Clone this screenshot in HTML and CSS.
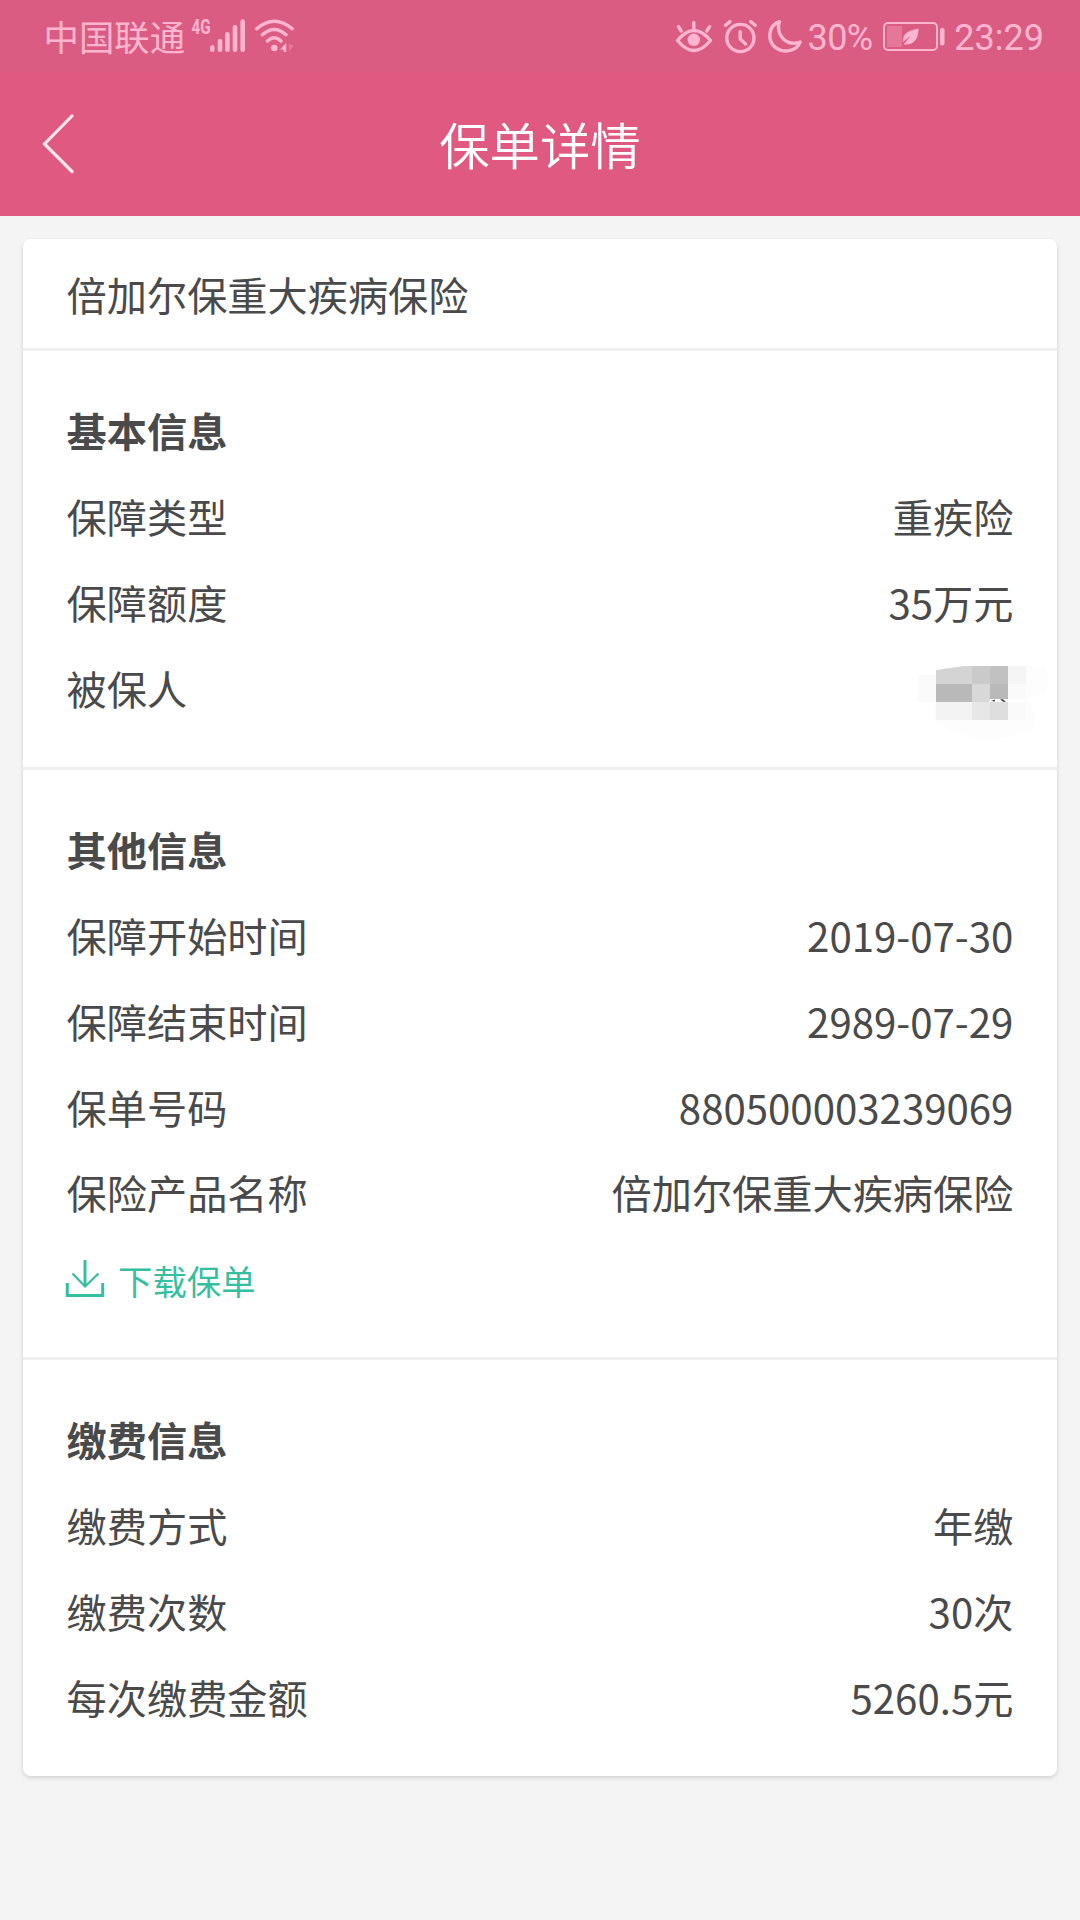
FILE: index.html
```html
<!DOCTYPE html>
<html lang="zh-CN">
<head>
  <meta charset="UTF-8" />
  <meta name="viewport" content="width=device-width, initial-scale=1.0"/>
  <title>保单详情</title>
  <link rel="stylesheet" href="styles.css">
</head>
<body>

<div class="status-bar">
  <div class="status-left">
    <span class="carrier">中国联通</span>
    <svg class="signal" width="56" height="52" viewBox="190 10 56 52">
      <text x="191.500" y="34" textLength="19" lengthAdjust="spacingAndGlyphs" class="network">4G</text>
      <g class="stroke bars">
        <path d="M212.3 47.5v2.2M220 41v8.7M227.4 34.4v15.3M235 27.2v22.5M242.7 21.5v28.2"/>
      </g>
    </svg>
    <svg class="wifi" width="40" height="36" viewBox="254 18 40 36">
      <path class="stroke" d="M256.7 28.7Q274.3 13.7 292.2 28.7M262.4 34.7Q274.3 24.3 286 34.7M267.5 41Q274.3 34.5 281 41"/>
      <circle class="solid" cx="274.3" cy="48" r="3.3"/>
      <path class="solid" d="M280 49.5L286.2 43v9h-2.5v-2.5z"/>
      <path class="solid dim" d="M288.8 43.5v8l5-5.5z"/>
    </svg>
  </div>
  <div class="status-right">
    <svg class="eye" width="38" height="36" viewBox="675 18 38 36">
      <path class="stroke" d="M677.5 40.5Q694 20.5 710.5 40.5Q694 60.5 677.5 40.5zM693.8 22.5v6M678.5 26.7l2.8 4.3M709.6 26.7l-2.8 4.3"/>
      <circle class="solid" cx="693.8" cy="39.8" r="6.2"/>
    </svg>
    <svg class="alarm" width="36" height="36" viewBox="723 18 36 36">
      <circle class="stroke" cx="740.4" cy="38" r="13.6"/>
      <path class="stroke" d="M740.2 31.7v7.4l5.4 4.8M725.6 25.2l4.4-3.6M755.2 25.2l-4.4-3.6"/>
    </svg>
    <svg class="moon" width="34" height="36" viewBox="768 18 34 36">
      <path class="stroke" d="M779.3 21.7C767.5 26 767 41 776 48C785 54 797 50.5 800.2 42C787 46.5 775.5 36 779.3 21.7z"/>
    </svg>
    <span class="percent">30%</span>
    <svg class="battery" width="64" height="32" viewBox="882 20 64 32">
      <rect class="frame" x="884" y="23" width="53" height="27" rx="4"/>
      <rect class="solid dim" x="887" y="26" width="15" height="21"/>
      <path class="solid" d="M918.5 28.5C907 31 902.5 34 903 42L911 35.5L903.5 44.5C914 45.5 918.5 39 918.5 28.5z"/>
      <rect class="solid" x="940" y="28" width="4.5" height="17.5" rx="2"/>
    </svg>
    <span class="clock">23:29</span>
  </div>
</div>

<header class="header">
  <a class="back" href="#">
    <svg width="34" height="60" viewBox="42 113 34 60">
      <path d="M72 115L44.5 143L72 170.500"/>
    </svg>
  </a>
  <h1 class="header-title">保单详情</h1>
</header>

<main class="card">
  <div class="card-title">倍加尔保重大疾病保险</div>

  <section class="section">
    <h2 class="row">基本信息</h2>
    <div class="row"><span>保障类型</span><span>重疾险</span></div>
    <div class="row"><span>保障额度</span><span>35万元</span></div>
    <div class="row">
      <span>被保人</span>
      <svg class="mosaic" width="146" height="78" viewBox="910 662 146 78">
        <path fill="#fdfdfd" d="M918 675h18v-3l28-6h62l18-1q6 7 6 15t-6 15l-16 3q12 14 4 32l-30 8q-40 4-68-18v-18h-18z"/>
        <path fill="#d4d4d4" d="M936 670l28-4h8v18h-36z"/>
        <path fill="#cacaca" d="M972 666h18v18h-18z"/>
        <path fill="#c1c1c1" d="M990 666h18v18h-18z"/>
        <path fill="#f5f5f5" d="M1008 666h18v18h-18z"/>
        <path fill="#b9b9b9" d="M936 684h36v18h-36zM990 684h18v15h-18z"/>
        <path fill="#d8d8d8" d="M972 684h18v18h-18z"/>
        <path fill="#fafafa" d="M1008 684h18v15h-18zM1008 702h18v18h-18zM918 675h18v27h-18z"/>
        <path fill="#f3f3f3" d="M936 702h36v18h-36z"/>
        <path fill="#e7e7e7" d="M972 702h18v18h-18z"/>
        <path fill="#dedede" d="M990 702h18v18h-18z"/>
        <path fill="#ffffff" d="M988 701l8-2h30v3h-36z"/>
        <path fill="#444444" d="M991 701l4-1.5v2zM1000 699.3h3l3 2.5h-3z"/>
      </svg>
    </div>
  </section>

  <section class="section">
    <h2 class="row">其他信息</h2>
    <div class="row"><span>保障开始时间</span><span>2019-07-30</span></div>
    <div class="row"><span>保障结束时间</span><span>2989-07-29</span></div>
    <div class="row"><span>保单号码</span><span>880500003239069</span></div>
    <div class="row"><span>保险产品名称</span><span>倍加尔保重大疾病保险</span></div>
    <a class="row download" href="#">
      <svg width="40" height="40" viewBox="65 1257 40 40">
        <path d="M67.3 1281v12.5h35.4V1281M85 1258v26"/>
        <path class="thin" d="M72.5 1271.5L85 1284.5L98.5 1271.5"/>
      </svg>
      <span>下载保单</span>
    </a>
  </section>

  <section class="section">
    <h2 class="row">缴费信息</h2>
    <div class="row"><span>缴费方式</span><span>年缴</span></div>
    <div class="row"><span>缴费次数</span><span>30次</span></div>
    <div class="row"><span>每次缴费金额</span><span>5260.5元</span></div>
  </section>
</main>

</body>
</html>
```
FILE: styles.css
```css
:root {
  --bg-color: #f4f4f4;
  --card-bg-color: #ffffff;
  --text-color: #4a4a4a;
  --border-color: #f0f0f0;
  --accent-color: #df5980;
  --status-bg-color: #da5c82;
  --status-color: #ffb5cf;
  --link-color: #36bf9f;
  --font-family: "Noto Sans CJK SC", sans-serif;
}

*, *::before, *::after { box-sizing: border-box; }

body {
  margin: 0;
  min-height: 1920px;
  background-color: var(--bg-color);
  color: var(--text-color);
  font-family: var(--font-family);
  font-size: 40.2px;
}

svg {
  display: block;
  flex-shrink: 0;
}

/* status bar */
.status-bar {
  display: flex;
  justify-content: space-between;
  height: 72px;
  padding: 0 36px 0 43.5px;
  background-color: var(--status-bg-color);
  color: var(--status-color);
}

.status-left,
.status-right {
  display: flex;
  align-items: center;
}

.carrier {
  font-size: 35.4px;
  font-weight: 400;
  line-height: 72px;
}

.signal { margin-left: 5px; }
.wifi { margin-left: 8px; }
.alarm { margin-left: 10px; }
.moon { margin-left: 9px; }

.network {
  font-family: Roboto, sans-serif;
  font-size: 20.5px;
  font-weight: 700;
  fill: var(--status-color);
}

.stroke {
  fill: none;
  stroke: var(--status-color);
  stroke-width: 3.4;
  stroke-linecap: round;
  stroke-linejoin: round;
}

.bars { stroke-width: 4.6; }
.solid { fill: var(--status-color); }
.dim { opacity: 0.3; }

.frame {
  fill: none;
  stroke: var(--status-color);
  stroke-width: 2;
}

.percent,
.clock {
  padding-top: 3px;
  font-family: Roboto, sans-serif;
  font-size: 36px;
  line-height: 72px;
}

.percent {
  margin-left: 6px;
  letter-spacing: -0.7px;
}

.battery { margin-left: 10px; }
.clock { margin-left: 8px; }

/* header */
.header {
  display: grid;
  grid-template-columns: 120px 1fr 120px;
  align-items: center;
  height: 144px;
  background-color: var(--accent-color);
  color: #ffffff;
}

.back { padding-left: 42px; }

.back path {
  fill: none;
  stroke: #ffe6ef;
  stroke-width: 3.2;
  stroke-linecap: round;
}

.header-title {
  margin: 0;
  font-size: 50.4px;
  font-weight: 350;
  line-height: 72px;
  text-align: center;
}

/* policy card */
.card {
  margin: 23px 23px 0;
  background-color: var(--card-bg-color);
  border-radius: 8px;
  box-shadow: 0 2px 4px rgba(0, 0, 0, 0.14);
}

.card-title {
  height: 109px;
  padding: 0 43.6px;
  line-height: 109px;
}

.section {
  padding: 35.8px 43.6px 37px;
  border-top: 3px solid var(--border-color);
}

.row {
  display: flex;
  justify-content: space-between;
  align-items: center;
  height: 85.8px;
  margin: 0;
  font-size: 40.2px;
}

.mosaic { margin: 0 -42.6px -28px 0; }

.download {
  justify-content: flex-start;
  gap: 13px;
  height: 85.2px;
  padding-top: 3px;
  color: var(--link-color);
  font-size: 34.4px;
  text-decoration: none;
}

.download svg { margin-left: -1.6px; }
.download span { padding-top: 3px; }

.download path {
  fill: none;
  stroke: var(--link-color);
  stroke-width: 3;
}

.download .thin { stroke-width: 2.2; }
```
